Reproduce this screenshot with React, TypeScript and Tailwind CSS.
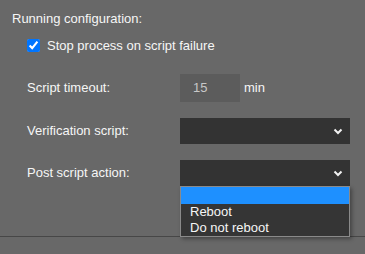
function Chevron() {
  return (
    <svg width="10" height="7" viewBox="0 0 10 7" className="shrink-0">
      <polyline points="1.5,1.5 5,5 8.5,1.5" fill="none" stroke="#f2f2f2" strokeWidth="2" />
    </svg>
  );
}

function FakeSelect() {
  return (
    <div className="w-[170px] h-[26px] bg-[#333333] flex items-center justify-end pr-[7px]">
      <Chevron />
    </div>
  );
}

export default function App() {
  return (
    <div
      className="w-[365px] h-[254px] bg-[#686868] text-[13px] text-[#f6f6f6] relative overflow-hidden"
      style={{ fontFamily: '"Liberation Sans", Arial, sans-serif' }}
    >
      <div className="h-[237px] border-b border-[#474747] pt-[11px]">
        <div className="pl-[12px] leading-[16px]">Running configuration:</div>

        <label className="mt-[12px] ml-[27px] flex items-center gap-[7px] h-[13px] leading-[16px]">
          <input type="checkbox" defaultChecked className="w-[13px] h-[13px] m-0" />
          <span>Stop process on script failure</span>
        </label>

        <div className="mt-[22px] flex items-center h-[28px]">
          <span className="w-[180px] pl-[27px]">Script timeout:</span>
          <div className="w-[60px] h-[28px] bg-[#5c5c5c] flex items-center pl-[13px] text-[#c8c8c8]">15</div>
          <span className="ml-[4px]">min</span>
        </div>

        <div className="mt-[16px] flex items-center h-[26px]">
          <span className="w-[180px] pl-[27px]">Verification script:</span>
          <FakeSelect />
        </div>

        <div className="mt-[16px] flex items-center h-[26px] relative">
          <span className="w-[180px] pl-[27px]">Post script action:</span>
          <FakeSelect />
          {/* open dropdown list */}
          <div className="absolute left-[180px] top-[26px] w-[170px] border border-[#8a8a8a] bg-[#353535] shadow-[2px_2px_4px_rgba(0,0,0,0.35)] leading-[16px]">
            <div className="h-[17px] bg-[#1e90ff]" />
            <div className="h-[16px] pl-[9px]">Reboot</div>
            <div className="h-[16px] pl-[9px]">Do not reboot</div>
          </div>
        </div>
      </div>
    </div>
  );
}
